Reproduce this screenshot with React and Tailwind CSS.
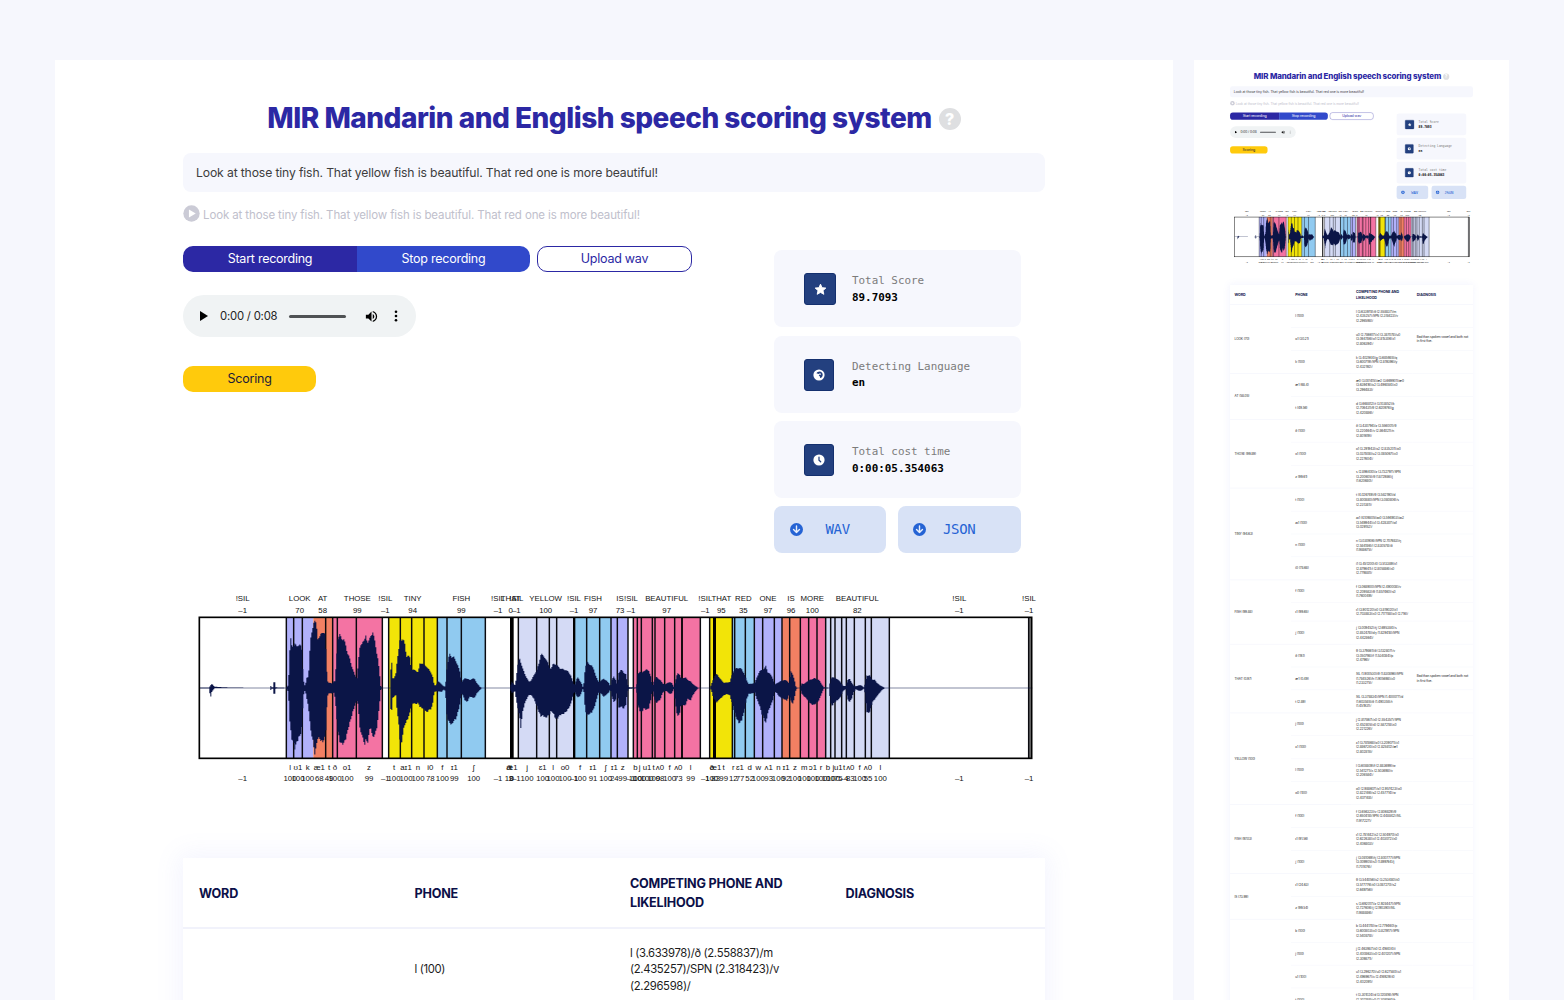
import React from 'react';

const SENTENCE = 'Look at those tiny fish. That yellow fish is beautiful. That red one is more beautiful!';

const PURPLE = '#b1b1fb';
const ORANGE = '#f28063';
const PINK = '#f473a3';
const YELLOW = '#f2e408';
const BLUE = '#90caf0';
const LAVENDER = '#d4daf5';

// Chart units are thirds of a pixel.
const BANDS = [
  [289, 370, PURPLE], [370, 429, ORANGE], [429, 577, PINK], [596, 742, YELLOW], [742, 886, BLUE],
  [985, 1151, LAVENDER], [1151, 1263, BLUE], [1263, 1314, PURPLE], [1330, 1531, PINK],
  [1559, 1628, YELLOW], [1628, 1693, BLUE], [1693, 1776, PURPLE], [1776, 1831, ORANGE],
  [1831, 1907, PINK], [1907, 2098, LAVENDER], [2516, 2525, '#777777'],
];

const LINES = [
  289, 311, 337, 407, 428, 442, 499, 577, 596, 631, 665, 702, 742, 771, 814, 886, 985, 1040, 1078, 1100,
  1190, 1229, 1263, 1282, 1314, 1330, 1342, 1354, 1387, 1395, 1424, 1454, 1476, 1531, 1559, 1627, 1634,
  1666, 1693, 1718, 1753, 1776, 1799, 1831, 1856, 1881, 1907, 1922, 1935, 1955, 1969, 1993,
  2026, 2044, 2098, 2516,
];

const THICK = [[960, 971], [1149, 1156], [1474, 1478], [1569, 1578]];

const WORDS = [
  [158, '!SIL', '–1'], [329, 'LOOK', '70'], [398, 'AT', '58'], [502, 'THOSE', '99'], [586, '!SIL', '–1'],
  [668, 'TINY', '94'], [814, 'FISH', '99'], [924, '!SIL', '–1'], [962, 'THAT', '0'], [979, '!SIL', '–1'],
  [1067, 'YELLOW', '100'], [1152, '!SIL', '–1'], [1209, 'FISH', '97'], [1290, 'IS', '73'],
  [1323, '!SIL', '–1'], [1430, 'BEAUTIFUL', '97'], [1546, '!SIL', '–1'], [1594, 'THAT', '95'],
  [1660, 'RED', '35'], [1734, 'ONE', '97'], [1803, 'IS', '96'], [1867, 'MORE', '100'],
  [2002, 'BEAUTIFUL', '82'], [2308, '!SIL', '–1'], [2517, '!SIL', '–1'],
];

const PHONES = [
  [158, '', '–1'], [300, 'l', '100'], [324, 'ʊ1', '100'], [353, 'k', '100'], [388, 'æ1', '68'],
  [417, 't', '49'], [435, 'ð', '100'], [471, 'o1', '100'], [537, 'z', '99'], [586, '', '–1'],
  [612, 't', '100'], [648, 'aɪ1', '100'], [684, 'n', '100'], [721, 'i0', '78'], [757, 'f', '100'],
  [793, 'ɪ1', '99'], [851, 'ʃ', '100'], [924, '', '–1'], [957, 'ð', '19'], [966, 'æ1', '0'],
  [979, '', '–1'], [963, 't', '2'], [1011, 'j', '100'], [1058, 'ɛ1', '100'], [1089, 'l', '100'],
  [1125, 'o0', '100'], [1152, '', '–1'], [1170, 'f', '100'], [1209, 'ɪ1', '91'], [1247, 'ʃ', '100'],
  [1273, 'ɪ1', '24'], [1298, 'z', '99'], [1323, '', '–1'], [1336, 'b', '100'], [1349, 'j', '100'],
  [1371, 'u1', '100'], [1391, 't', '100'], [1410, 'ʌ0', '98'], [1439, 'f', '100'], [1465, 'ʌ0', '73'],
  [1502, 'l', '99'], [1546, '', '–1'], [1565, 'ð', '100'], [1577, 'æ1', '83'], [1601, 't', '99'],
  [1630, 'r', '12'], [1650, 'ɛ1', '77'], [1679, 'd', '52'], [1705, 'w', '100'], [1736, 'ʌ1', '93'],
  [1765, 'n', '100'], [1788, 'ɪ1', '92'], [1815, 'z', '100'], [1843, 'm', '100'], [1869, 'ɔ1', '100'],
  [1893, 'r', '100'], [1914, 'b', '100'], [1930, 'j', '100'], [1945, 'u1', '75'], [1962, 't', '–4'],
  [1981, 'ʌ0', '83'], [2009, 'f', '100'], [2034, 'ʌ0', '55'], [2071, 'l', '100'],
  [2308, '', '–1'], [2517, '', '–1'],
];

// [x, amplitude above the axis, amplitude below the axis]
const ENVELOPE = [
  [28, 1.5, 1.5], [56, 1.5, 1.5], [60, 8, 30], [64, 12, 12], [68, 9, 6], [72, 4, 1], [100, 2, 1], [170, 1, 1], [239, 1, 1],
  [240, 8, 8], [243, 2, 2], [249, 2, 2], [250, 18, 18], [253, 17, 17], [254, 2, 2], [286, 1, 1], [290, 4, 6], [294, 10, 12],
  [297, 100, 90], [301, 146, 130], [303, 128, 150], [308, 126, 160], [313, 132, 180], [318, 124, 165],
  [324, 130, 150], [330, 128, 140], [334, 115, 120], [338, 40, 40], [341, 8, 8], [345, 8, 10], [348, 30, 28],
  [354, 34, 58], [358, 110, 100], [361, 148, 130], [366, 180, 150], [370, 198, 180], [374, 198, 200],
  [378, 188, 170], [382, 150, 150], [388, 152, 152], [393, 165, 160], [398, 170, 160], [403, 160, 150],
  [407, 100, 115], [410, 24, 30], [414, 16, 16], [424, 14, 16], [430, 20, 14], [434, 20, 30], [438, 90, 80],
  [442, 150, 130], [448, 158, 160], [454, 148, 168], [460, 146, 165], [465, 130, 155], [470, 108, 135],
  [476, 95, 110], [482, 70, 90], [488, 55, 68], [494, 36, 50], [499, 30, 38], [503, 70, 50], [507, 115, 110],
  [512, 130, 140], [517, 142, 145], [522, 140, 178], [526, 156, 150], [531, 138, 172], [536, 142, 130],
  [541, 155, 120], [547, 170, 148], [552, 145, 142], [558, 110, 125], [563, 86, 90], [567, 44, 50],
  [571, 6, 6], [575, 1, 1], [598, 1, 1], [600, 48, 60], [604, 78, 66], [607, 30, 30], [611, 28, 25],
  [616, 44, 22], [620, 85, 70], [625, 115, 110], [629, 148, 165], [633, 145, 170], [638, 148, 130],
  [643, 130, 110], [648, 95, 100], [653, 98, 90], [658, 90, 75], [663, 56, 50], [669, 55, 45], [676, 52, 48],
  [683, 48, 45], [688, 72, 56], [695, 75, 60], [702, 68, 65], [709, 64, 73], [716, 54, 65], [723, 44, 62],
  [728, 30, 40], [731, 8, 12], [737, 8, 10], [742, 20, 10], [747, 17, 10], [753, 12, 12], [759, 5, 5],
  [765, 4, 8], [768, 50, 75], [773, 85, 98], [778, 102, 105], [784, 93, 110], [790, 92, 98], [797, 80, 92],
  [803, 65, 70], [809, 46, 46], [813, 18, 16], [818, 24, 24], [824, 30, 38], [830, 28, 42], [838, 24, 26],
  [845, 28, 28], [852, 28, 30], [859, 15, 16], [868, 4, 6], [874, 1, 1], [959, 1, 1], [963, 20, 15],
  [969, 12, 12], [974, 8, 10], [977, 30, 35], [982, 68, 60], [987, 92, 85], [991, 78, 118], [996, 60, 75],
  [1002, 45, 48], [1009, 30, 32], [1016, 18, 20], [1023, 24, 22], [1030, 38, 32], [1038, 52, 52],
  [1045, 72, 72], [1052, 106, 86], [1058, 95, 82], [1065, 90, 90], [1071, 78, 85], [1077, 62, 80],
  [1082, 58, 68], [1088, 72, 75], [1095, 72, 92], [1102, 65, 90], [1110, 58, 80], [1118, 56, 78],
  [1126, 54, 72], [1134, 48, 62], [1141, 38, 48], [1147, 20, 26], [1152, 8, 10], [1158, 26, 24],
  [1163, 32, 28], [1168, 22, 25], [1173, 14, 14], [1177, 4, 4], [1180, 14, 12], [1184, 60, 65],
  [1189, 78, 82], [1196, 72, 78], [1203, 68, 74], [1210, 56, 62], [1217, 34, 40], [1224, 18, 14],
  [1231, 22, 16], [1240, 28, 26], [1248, 22, 20], [1255, 15, 13], [1260, 4, 4], [1264, 24, 25],
  [1270, 35, 42], [1276, 24, 35], [1280, 10, 10], [1285, 46, 60], [1292, 55, 55], [1300, 46, 62],
  [1306, 42, 50], [1310, 20, 20], [1313, 3, 3], [1338, 1, 1], [1342, 42, 52], [1348, 50, 68],
  [1354, 45, 72], [1361, 52, 60], [1368, 55, 66], [1375, 52, 60], [1381, 35, 36], [1386, 6, 6],
  [1391, 22, 30], [1397, 34, 46], [1403, 28, 40], [1410, 24, 34], [1416, 14, 15], [1424, 10, 8],
  [1430, 15, 10], [1437, 18, 18], [1444, 15, 16], [1450, 4, 4], [1455, 22, 50], [1461, 45, 86],
  [1467, 42, 78], [1472, 28, 50], [1478, 30, 52], [1485, 32, 52], [1492, 24, 32], [1500, 20, 38],
  [1507, 12, 22], [1515, 6, 10], [1523, 1, 1], [1559, 1, 1], [1563, 12, 8], [1568, 26, 28],
  [1574, 38, 38], [1580, 42, 44], [1586, 32, 34], [1592, 24, 30], [1600, 16, 22], [1610, 16, 18],
  [1618, 18, 22], [1626, 45, 50], [1633, 56, 76], [1640, 60, 96], [1647, 60, 106], [1654, 56, 95],
  [1661, 44, 72], [1668, 24, 34], [1675, 12, 18], [1685, 13, 16], [1693, 16, 14], [1700, 34, 36],
  [1707, 50, 52], [1714, 54, 78], [1721, 58, 92], [1726, 65, 106], [1732, 48, 75], [1739, 42, 56],
  [1746, 32, 40], [1753, 10, 12], [1758, 14, 14], [1766, 18, 26], [1774, 22, 30], [1782, 24, 34],
  [1790, 22, 38], [1796, 14, 20], [1800, 50, 36], [1806, 44, 48], [1811, 28, 35], [1816, 5, 8],
  [1820, 0.5, 0.5], [1829, 1, 1], [1833, 14, 16], [1840, 12, 24], [1848, 18, 32], [1856, 24, 42],
  [1864, 26, 50], [1872, 30, 50], [1879, 26, 44], [1886, 24, 36], [1892, 14, 20], [1900, 2, 2],
  [1916, 1, 1], [1920, 26, 46], [1925, 34, 54], [1933, 30, 42], [1942, 26, 36], [1950, 18, 28],
  [1958, 6, 8], [1966, 6, 4], [1971, 24, 34], [1977, 28, 42], [1983, 18, 34], [1989, 8, 14],
  [1996, 5, 4], [2005, 8, 8], [2013, 8, 8], [2020, 2, 2], [2025, 14, 20], [2027, 40, 70],
  [2033, 36, 76], [2039, 38, 70], [2046, 24, 42], [2053, 24, 34], [2060, 15, 24], [2068, 8, 14],
  [2076, 4, 5], [2083, 1, 1], [2525, 1, 1],
];

const AXIS = 309;

// Resamples the envelope into pixel-wide steps, so that it reads as audio samples.
function wavePath() {
  const up = [];
  const down = [];
  let k = 0;
  for (let x = 28; x < 2525; x += 3) {
    while (k < ENVELOPE.length - 2 && ENVELOPE[k + 1][0] <= x) k += 1;
    const [x0, u0, d0] = ENVELOPE[k];
    const [x1, u1, d1] = ENVELOPE[k + 1];
    const t = Math.min(1, (x - x0) / (x1 - x0));
    const a = 1 + 0.025 * Math.sin(x * 12.9898);
    const b = 1 + 0.025 * Math.sin(x * 78.233);
    const u = (AXIS - (u0 + (u1 - u0) * t) * a).toFixed(1);
    const d = (AXIS + (d0 + (d1 - d0) * t) * b).toFixed(1);
    up.push(`${x} ${u}`, `${x + 3} ${u}`);
    down.push(`${x} ${d}`, `${x + 3} ${d}`);
  }
  return 'M' + up.join('L') + 'L' + down.reverse().join('L') + 'Z';
}

const WAVE_PATH = wavePath();

const GROUPS = [
  ['LOOK (70)', [
    ['l (100)', ['l (3.633978)/ð (2.558837)/m', '(2.435257)/SPN (2.318423)/v', '(2.296598)/']],
    ['ʊ1 (30.21)', ['u0 (2.786617)/ʌ1 (3.387078)/u0', '(3.064786)/o1 (2.815306)/ɪ1', '(2.806394)/'], true],
    ['k (100)', ['k (3.402944)/g (3.685985)/q', '(3.600719)/SPN (2.819396)/y', '(2.432192)/']],
  ]],
  ['AT (58.05)', [
    ['æ1 (68.4)', ['æ0 (3.001415)/æ2 (3.669901)/æ0', '(3.639416)/ɛ2 (3.496084)/ʌ0', '(3.296483)/']],
    ['t (49.56)', ['d (3.668812)/t (3.103852)/k', '(2.706431)/θ (2.620976)/g', '(2.420886)/']],
  ]],
  ['THOSE (99.89)', [
    ['ð (100)', ['ð (3.430794)/z (3.556001)/θ', '(3.220464)/v (2.864021)/n', '(2.801619)/']],
    ['o1 (100)', ['o1 (3.291943)/o2 (2.835201)/o0', '(3.037808)/u2 (3.085067)/ʌ0', '(2.227604)/']],
    ['z (99.61)', ['s (2.896400)/z (3.732797)/SPN', '(3.200605)/θ (1.872986)/j', '(1.620680)/']],
  ]],
  ['TINY (94.63)', [
    ['t (100)', ['t (4.026749)/θ (3.582190)/d', '(3.800880)/SPN (3.080806)/s', '(2.231381)/']],
    ['aɪ1 (100)', ['aɪ1 (4.109805)/aɪ0 (3.594903)/aɪ2', '(3.549944)/ʌ1 (3.428307)/ɑ1', '(3.029152)/']],
    ['n (100)', ['n (3.030906)/SPN (2.707683)/ŋ', '(2.584186)/l (2.830578)/ð', '(1.988675)/']],
    ['i0 (78.68)', ['i1 (3.451200)/i0 (3.513389)/ɪ1', '(2.879641)/i (2.805886)/ʌ0', '(2.779881)/']],
  ]],
  ['FISH (99.88)', [
    ['f (100)', ['f (3.068900)/SPN (2.490008)/v', '(2.209583)/θ (1.857460)/s0', '(1.760049)/']],
    ['ɪ1 (99.65)', ['ɪ1 (3.901220)/ɪ0 (3.819020)/ɪ1', '(2.703883)/ʌ0 (2.717788)/ɛ0 (2.716)/']],
    ['ʃ (100)', ['ʃ (3.009452)/tʃ (2.695384)/s', '(2.852478)/dʒ (1.829418)/SPN', '(2.442864)/']],
  ]],
  ['THAT (0.97)', [
    ['ð (19.1)', ['θ (3.379861)/ð (3.132807)/v', '(3.050798)/f (1.534084)/p', '(2.4796)/']],
    ['æ1 (0.49)', ['SIL (1.900530)/θ (1.830896)/SPN', '(1.784526)/h (1.905698)/ʌ0', '(1.233275)/'], true],
    ['t (2.89)', ['SIL (3.378834)/SPN (1.400077)/d', '(1.603585)/ð (1.490355)/t', '(1.451931)/']],
  ]],
  ['YELLOW (100)', [
    ['j (100)', ['j (2.817867)/ʌ0 (2.554357)/SPN', '(2.452805)/ɪ0 (2.587218)/ʌ0', '(2.221226)/']],
    ['ɛ1 (100)', ['ɛ1 (3.781868)/ɛ0 (3.209071)/ʌ1', '(2.886724)/ʌ0 (2.825812)/æ1', '(2.802815)/']],
    ['l (100)', ['l (3.608809)/ɫ (2.883699)/w', '(2.541271)/ʌ (2.503698)/v', '(2.206584)/']],
    ['o0 (100)', ['o0 (2.988607)/o1 (2.957423)/o0', '(2.822146)/o2 (2.457714)/w', '(2.407148)/']],
  ]],
  ['FISH (97.03)', [
    ['f (100)', ['f (3.656323)/v (2.806829)/θ', '(2.650418)/SPN (2.448842)/SIL', '(1.917227)/']],
    ['ɪ1 (91.56)', ['ɪ1 (2.781442)/ɪ2 (2.504970)/ɪ0', '(2.622638)/ʌ1 (2.403072)/ʌ0', '(2.406803)/']],
    ['ʃ (100)', ['ʃ (3.081069)/tʃ (2.800777)/SPN', '(3.009905)/s0 (1.899764)/j', '(1.701476)/']],
  ]],
  ['IS (73.99)', [
    ['ɪ1 (24.63)', ['θ (3.544056)/ɪ2 (3.253480)/ɪ0', '(3.577776)/ɪ0 (3.087270)/s2', '(2.649756)/']],
    ['z (99.54)', ['s (3.692017)/z (2.928447)/SPN', '(2.727606)/ʃ (2.190390)/SIL', '(1.988886)/']],
  ]],
  ['BEAUTIFUL (97.26)', [
    ['b (100)', ['b (3.444178)/w (2.779460)/p', '(3.600803)/ʌ0 (3.821917)/SPN', '(2.540878)/']],
    ['j (100)', ['j (2.463987)/ɪ0 (2.416404)/i', '(2.400863)/ʌ0 (2.401207)/SPN', '(2.309871)/']],
    ['u1 (100)', ['u1 (3.296270)/u0 (2.627580)/u1', '(2.496967)/ʌ (2.416929)/i0', '(2.402091)/']],
    ['t (100)', ['t (3.301024)/d (3.120816)/SPN', '(2.302188)/ʌ0 (2.308064)/k', '(2.201108)/']],
    ['ʌ0 (98.2)', ['ʌ0 (3.301024)/ɪ0 (3.120816)/SPN', '(2.302188)/ʌ0 (2.308064)/k', '(2.201108)/']],
    ['f (100)', ['f (3.412060)/v (2.906112)/θ', '(2.610355)/SPN (2.408201)/s', '(2.017334)/']],
    ['ʌ0 (73.4)', ['ʌ0 (3.201553)/ɪ0 (3.020418)/o0', '(2.702188)/w (2.508064)/l', '(2.301108)/']],
    ['l (99.2)', ['l (3.501902)/w (2.820816)/o0', '(2.602188)/ʌ0 (2.408064)/v', '(2.101108)/']],
  ]],
];

function Chart() {
  return (
    <svg viewBox="-21 0 2589 615" className="block h-[205px] w-[863px] overflow-visible">
      {BANDS.map(([a, b, fill]) => (
        <rect key={a} x={a} y="96" width={b - a} height="424" fill={fill} />
      ))}
      {LINES.map((x) => (
        <line key={x} x1={x} x2={x} y1="96" y2="520" stroke="#0b0b10" strokeWidth="4.4" />
      ))}
      {THICK.map(([a, b]) => (
        <rect key={a} x={a} y="96" width={b - a} height="424" fill="#000" />
      ))}
      <path d={WAVE_PATH} fill="#0b1547" />
      <rect x="28" y="97" width="2497" height="423" fill="none" stroke="#000" strokeWidth="5" />
      <g fontFamily="'Liberation Sans', 'DejaVu Sans', sans-serif" fontSize="23.5" fill="#111" textAnchor="middle">
        {WORDS.map(([x, word, score]) => (
          <React.Fragment key={x}>
            <text x={x} y="47">{word}</text>
            <text x={x} y="83">{score}</text>
          </React.Fragment>
        ))}
        {PHONES.map(([x, phone, score]) => (
          <React.Fragment key={x}>
            {phone && <text x={x} y="554">{phone}</text>}
            <text x={x} y="589">{score}</text>
          </React.Fragment>
        ))}
      </g>
    </svg>
  );
}

function StarIcon() {
  return (
    <svg viewBox="0 0 24 24" className="size-[15px]" fill="#fff" stroke="#fff" strokeWidth="1.5" strokeLinejoin="round">
      <path d="M12 3.5l2.5 5.6 6 .6-4.5 4 1.3 6-5.3-3.1-5.3 3.1 1.3-6-4.5-4 6-.6z" />
    </svg>
  );
}

function GlobeIcon() {
  return (
    <svg viewBox="0 0 20 20" className="size-[14px]">
      <circle cx="10" cy="10" r="8" fill="#fff" />
      <path
        fill="#23407f"
        d="M6.3 7.6c1-1.6 2.6-2.6 4.4-2.6 2.6 0 4.6 2 4.6 4.6 0 2.4-1.6 4.2-3.6 4.8l-.6-2.6-1.5-1.2 1.2-1.2 1.8.4.5-1.3-1.7-1-1.9 1.2z"
      />
    </svg>
  );
}

function ClockIcon() {
  return (
    <svg viewBox="0 0 20 20" className="size-[14px]">
      <circle cx="10" cy="10" r="8" fill="#fff" />
      <path d="M10 6v4.2l2.4 2.4" fill="none" stroke="#23407f" strokeWidth="1.8" strokeLinecap="round" />
    </svg>
  );
}

function DownIcon() {
  return (
    <svg viewBox="0 0 24 24" className="mt-[2px] size-[13px]">
      <circle cx="12" cy="12" r="12" fill="#2563d4" />
      <path d="M12 5.5v12M6.5 12.2l5.5 5.5 5.5-5.5" fill="none" stroke="#e8effb" strokeWidth="2.6" strokeLinecap="round" strokeLinejoin="round" />
    </svg>
  );
}

function Stat({ icon, wide, label, value }) {
  return (
    <div className="flex h-[77px] items-center rounded-lg bg-[#f6f7fd] pl-[30px] pt-px">
      <div className="flex w-[48px] shrink-0">
        <div className={`${wide ? 'w-[32px]' : 'w-[30px]'} flex h-[32px] items-center justify-center rounded-[3px] border border-[#14306e] bg-[#23407f]`}>
          {icon}
        </div>
      </div>
      <div className="pt-px font-['DejaVu_Sans_Mono',monospace] text-[10.9px] leading-[16.4px]">
        <p className="text-[#7b7b7b]">{label}</p>
        <p className="font-bold text-black">{value}</p>
      </div>
    </div>
  );
}

function DownloadButton({ className, children }) {
  return (
    <div className={`${className} flex h-[47px] items-center rounded-lg bg-[#d8e2f6] pb-[2px] font-['DejaVu_Sans_Mono',monospace] text-[14px] leading-none tracking-tight text-[#2563d4]`}>
      {children}
    </div>
  );
}

function AudioPlayer() {
  return (
    <div className="mt-[23.4px] flex h-[42px] w-[233px] items-center rounded-full bg-[#f0f3f4] pl-[17px] text-[#000]">
      <svg viewBox="0 0 8 10" className="h-[10px] w-[8px]"><path d="M0 0l8 5-8 5z" /></svg>
      <span className="ml-[12px] w-[69px] pt-px font-['Inter',sans-serif] text-[11.3px] leading-none tracking-[-0.2px] text-[#222]">0:00 / 0:08</span>
      <span className="h-[3px] w-[57px] rounded-full bg-[#4f5254]" />
      <svg viewBox="0 0 24 24" className="ml-[17.5px] size-[15px]">
        <path d="M3 9v6h4l5 5V4L7 9H3zm13.5 3A4.5 4.5 0 0014 7.97v8.05c1.48-.73 2.5-2.25 2.5-4.02zM14 3.23v2.06c2.89.86 5 3.54 5 6.71s-2.11 5.85-5 6.71v2.06c4.01-.91 7-4.49 7-8.77s-2.99-7.86-7-8.77z" />
      </svg>
      <svg viewBox="0 0 4 12" className="ml-[15.5px] h-3 w-1">
        <circle cx="2" cy="1.8" r="1.3" /><circle cx="2" cy="6" r="1.3" /><circle cx="2" cy="10.2" r="1.3" />
      </svg>
    </div>
  );
}

function ResultTable() {
  return (
    <table className="w-[862px] table-fixed border-collapse bg-white text-left shadow-[0_0_24px_4px_rgba(120,130,240,0.09)]">
      <thead>
        <tr className="h-[70px] border-b-2 border-[#f1f2fb] text-[12.6px] leading-[18.7px] tracking-[-0.2px] text-[#0b1048]">
          {['WORD', 'PHONE', 'COMPETING PHONE AND LIKELIHOOD', 'DIAGNOSIS'].map((head) => (
            <th key={head} className="px-4 pb-0 pt-[3px] font-bold">{head}</th>
          ))}
        </tr>
      </thead>
      <tbody className="text-[11.3px] leading-[16.3px] tracking-[-0.34px] text-[#1c1c1c]">
        {GROUPS.map(([word, phones], g) =>
          phones.map(([phone, lines, flagged], i) => (
            <tr key={`${g}-${i}`}>
              {i === 0 && (
                <td rowSpan={phones.length} className="border-b-2 border-[#f1f2fb] px-4 align-middle">{word}</td>
              )}
              <td className={`${i === phones.length - 1 ? 'border-[#f1f2fb]' : 'border-[#f5f6fc]'} border-b-2 px-4 align-middle`}>{phone}</td>
              <td className="whitespace-nowrap border-b-2 border-[#f5f6fc] px-4 pb-[14.5px] pt-4">
                {lines.map((line) => <div key={line}>{line}</div>)}
              </td>
              <td className="border-b-2 border-[#f5f6fc] pl-4 pr-2 align-middle">
                {flagged && 'Bad than spoken vowel and both not in first five.'}
              </td>
            </tr>
          )),
        )}
      </tbody>
    </table>
  );
}

function ScoringPage() {
  return (
    <div className="w-[1118px] bg-white px-[128px] pt-[38px] font-['Inter','Noto_Sans',sans-serif]">
      <div className="flex h-[40px] items-center justify-center gap-[7px]">
        <h1 className="whitespace-nowrap text-[28px] font-extrabold tracking-[-0.49px] text-[#2c28a4]">
          MIR Mandarin and English speech scoring system
        </h1>
        <span className="mt-[2px] flex size-[22px] items-center justify-center rounded-full bg-[#dedfe1] text-[16px] font-extrabold text-white">?</span>
      </div>
      <div className="mt-[15px] flex h-[39px] items-center rounded-lg bg-[#f6f7fd] pl-[13px] pt-px text-[12.2px] tracking-[-0.14px] text-[#3d3d3d]">{SENTENCE}</div>
      <div className="mt-[12px] flex h-[20px] items-center gap-[3px] text-[11.5px] tracking-[-0.12px] text-[#c0c0cc]">
        <svg viewBox="0 0 16 16" className="mb-[2px] size-[17px]">
          <circle cx="8" cy="8" r="7.7" fill="#cbcbd6" />
          <path d="M5.6 4.2l6.4 3.8-6.4 3.8z" fill="#fff" />
        </svg>
        <span className="pt-[3px]">{SENTENCE}</span>
      </div>
      <div className="flex h-[361px] justify-between pt-[22px]">
        <div>
          <div className="flex h-[26px] items-center text-[12.5px] tracking-[-0.25px]">
            <div className="flex h-[26px] w-[174px] items-center justify-center rounded-l-[10px] bg-[#2c28a4] pt-px text-white">Start recording</div>
            <div className="flex h-[26px] w-[173px] items-center justify-center rounded-r-[10px] bg-[#3149cb] pt-px text-white">Stop recording</div>
            <div className="mb-px ml-[7px] flex h-[26px] w-[155px] items-center justify-center rounded-[10px] border-[1.5px] border-[#2c28a4] pt-px text-[#2c28a4]">Upload wav</div>
          </div>
          <AudioPlayer />
          <div className="mt-[28.5px] flex h-[26px] w-[133px] items-center justify-center rounded-[10px] bg-[#ffca0c] pt-px text-[12.5px] tracking-[-0.2px] text-[#1b1b38]">Scoring</div>
        </div>
        <div className="mr-[24px] flex w-[247px] flex-col gap-[8.5px] pt-[4px]">
          <Stat wide icon={<StarIcon />} label="Total Score" value="89.7093" />
          <Stat icon={<GlobeIcon />} label="Detecting Language" value="en" />
          <Stat icon={<ClockIcon />} label="Total cost time" value="0:00:05.354063" />
          <div className="-mt-[0.5px] flex gap-[11.5px]">
            <DownloadButton className="w-[112px] gap-[23px] pl-[15.5px]"><DownIcon />WAV</DownloadButton>
            <DownloadButton className="w-[123.5px] gap-[17px] pl-[15.5px]"><DownIcon />JSON</DownloadButton>
          </div>
        </div>
      </div>
      <Chart />
      <div className="h-[68px]" />
      <ResultTable />
    </div>
  );
}

export default function App() {
  return (
    <div className="flex h-[1000px] w-[1564px] gap-[21px] overflow-hidden bg-[#f6f7fd] pl-[55px] pt-[60px]">
      <div className="h-[940px] w-[1118px] shrink-0 overflow-hidden bg-white">
        <ScoringPage />
      </div>
      <div className="h-[940px] w-[315px] shrink-0 overflow-hidden bg-white">
        <div className="w-[1118px] origin-top-left scale-[0.2818]">
          <ScoringPage />
        </div>
      </div>
    </div>
  );
}
